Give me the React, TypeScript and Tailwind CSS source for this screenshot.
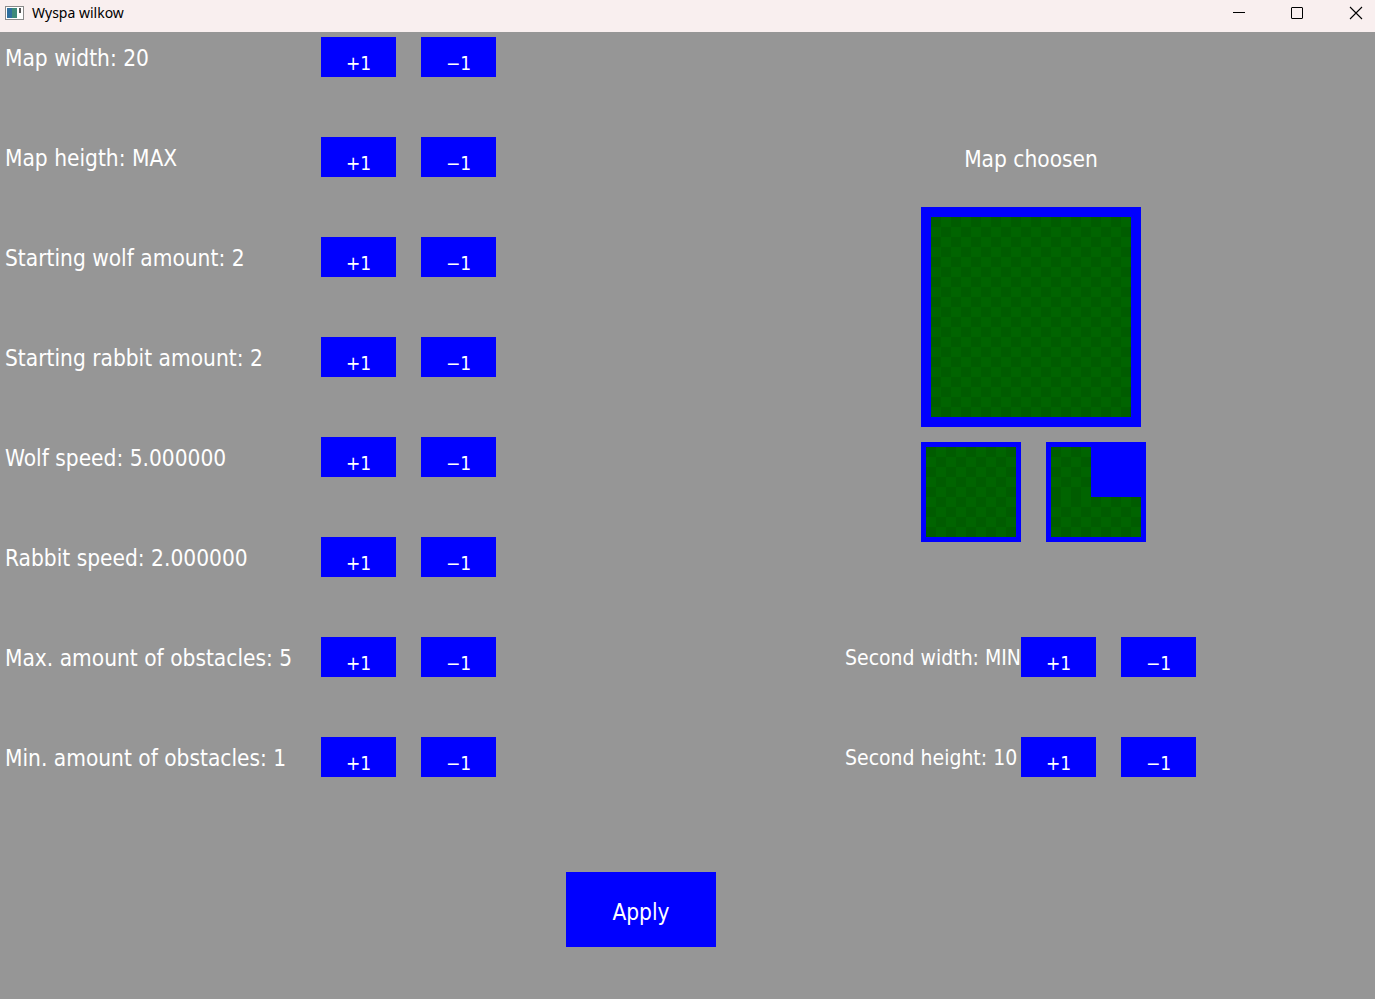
import React from 'react';

const leftRows = [
  'Map width: 20',
  'Map heigth: MAX',
  'Starting wolf amount: 2',
  'Starting rabbit amount: 2',
  'Wolf speed: 5.000000',
  'Rabbit speed: 2.000000',
  'Max. amount of obstacles: 5',
  'Min. amount of obstacles: 1',
];

const checker =
  'bg-[repeating-conic-gradient(#006400_0_25%,#005c00_0_50%)] bg-[length:20px_20px]';

const font = { fontFamily: '"DejaVu Sans", "Liberation Sans", sans-serif' };

function StepButton({ label }: { label: string }) {
  return (
    <button className="w-[75px] h-[40px] bg-[#0000ff] text-white text-[19px] leading-none flex items-end justify-center pb-[4px] font-stretch-condensed">
      {label}
    </button>
  );
}

function Buttons() {
  return (
    <div className="flex gap-[25px]">
      <StepButton label="+1" />
      <StepButton label="−1" />
    </div>
  );
}

function TitleBar() {
  return (
    <div className="h-8 bg-[#f9efef] flex items-start" style={{ fontFamily: '"Noto Sans", "Liberation Sans", sans-serif' }}>
      <svg width="20" height="15" viewBox="0 0 20 15" className="ml-[5px] mt-[6px]">
        <rect x="0.5" y="0.5" width="18" height="13" fill="#fff" stroke="#8a8a8a" />
        <rect x="2" y="2" width="10" height="10" fill="#3d8a7a" />
        <rect x="2" y="2" width="5" height="10" fill="#2f6f9f" />
        <rect x="14" y="2" width="2" height="5" fill="#555" />
      </svg>
      <span className="ml-[7px] mt-[3px] text-[14px] leading-[20px] text-black">Wyspa wilkow</span>
      <div className="ml-auto mr-[12px] flex items-start gap-[46px]">
        <div className="w-[12px] h-px bg-black mt-[12px]" />
        <div className="w-[12px] h-[12px] border border-black rounded-[1px] mt-[7px]" />
        <svg width="14" height="14" viewBox="0 0 14 14" className="mt-[6px]">
          <path d="M1 1L13 13M13 1L1 13" stroke="#000" strokeWidth="1.1" />
        </svg>
      </div>
    </div>
  );
}

function SideRow({ label }: { label: string }) {
  return (
    <div className="flex">
      <div className="relative z-10 w-[176px] h-[40px] flex items-center pt-[4px] text-[21px] whitespace-nowrap font-stretch-condensed">
        {label}
      </div>
      <Buttons />
    </div>
  );
}

export default function App() {
  return (
    <div className="w-[1375px] h-[999px] bg-[#969696] overflow-hidden text-white" style={font}>
      <TitleBar />
      <div className="flex">
        <div className="w-[845px]">
          {leftRows.map((row) => (
            <div key={row} className="h-[100px] flex items-start pt-[5px]">
              <div className="w-[321px] h-[40px] flex items-center pl-[5px] pt-[4px] text-[22.5px] whitespace-nowrap font-stretch-condensed">
                {row}
              </div>
              <Buttons />
            </div>
          ))}
          <button className="ml-[566px] mt-[40px] w-[150px] h-[75px] bg-[#0000ff] text-white text-[22.5px] flex items-center justify-center pt-[6px] font-stretch-condensed">
            Apply
          </button>
        </div>
        <div className="flex flex-col">
          <div className="mt-[114px] ml-[76px] w-[220px] h-[24px] flex items-center justify-center pt-[3px] text-[22.5px] font-stretch-condensed">
            Map choosen
          </div>
          <div className="mt-[37px] ml-[76px] w-[220px] h-[220px] bg-[#0000ff] p-[10px]">
            <div className={`w-full h-full ${checker}`} />
          </div>
          <div className="mt-[15px] ml-[76px] flex gap-[25px]">
            <div className="w-[100px] h-[100px] bg-[#0000ff] p-[5px]">
              <div className={`w-full h-full ${checker}`} />
            </div>
            <div className="w-[100px] h-[100px] bg-[#0000ff] p-[5px]">
              <div className="w-full h-full flex flex-col">
                <div className="flex h-[50px]">
                  <div className={`w-[40px] h-full ${checker}`} />
                  <div className="flex-1 h-full bg-[#0000ff]" />
                </div>
                <div className={`flex-1 ${checker}`} />
              </div>
            </div>
          </div>
          <div className="mt-[95px]">
            <SideRow label="Second width: MIN" />
          </div>
          <div className="mt-[60px]">
            <SideRow label="Second height: 10" />
          </div>
        </div>
      </div>
    </div>
  );
}
